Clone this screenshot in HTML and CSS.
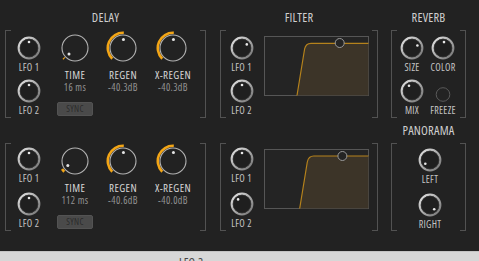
FILE: index.html
```html
<!DOCTYPE html>
<html lang="en">
<head>
    <meta charset="UTF-8">
    <meta name="viewport" content="width=device-width, initial-scale=1.0">
    <title>Effects</title>
    <link rel="stylesheet" href="styles.css">
</head>
<body>

    <!-- shared gradient for the small knobs -->
    <svg class="defs" width="0" height="0">
        <defs>
            <linearGradient id="ring" x1="0" y1="0" x2="1" y2="1">
                <stop offset="0" stop-color="#e4e4e4"/>
                <stop offset="1" stop-color="#727272"/>
            </linearGradient>
        </defs>
    </svg>

    <!-- Row 1 -->
    <div class="row first">
        <section class="module delay">
            <h2>DELAY</h2>
            <div class="box">
                <div class="lfos">
                    <div class="ctl">
                        <svg class="knob" viewBox="0 0 24 24"><circle class="ring" cx="12" cy="12" r="10.3"/><circle class="face" cx="12" cy="12" r="8.9"/><circle class="dot" cx="12" cy="6" r="1.3"/></svg>
                        <span class="lbl">LFO 1</span>
                    </div>
                    <div class="ctl">
                        <svg class="knob" viewBox="0 0 24 24"><circle class="ring" cx="12" cy="12" r="10.3"/><circle class="face" cx="12" cy="12" r="8.9"/><circle class="dot" cx="12" cy="6" r="1.3"/></svg>
                        <span class="lbl">LFO 2</span>
                    </div>
                </div>
                <div class="param time">
                    <svg class="big" viewBox="0 0 34 34"><path class="arc" d="M6.25 27.75 A15.2 15.2 0 0 1 5.53 26.97"/><circle class="face" cx="17" cy="17" r="13"/><circle class="dot" cx="10.99" cy="23.01" r="1.5"/></svg>
                    <span class="name">TIME</span>
                    <span class="val">16 ms</span>
                    <button class="sync">SYNC</button>
                </div>
                <div class="param regen">
                    <svg class="big" viewBox="0 0 34 34"><path class="arc" d="M6.25 27.75 A15.2 15.2 0 0 1 17.8 1.82"/><circle class="face" cx="17" cy="17" r="13"/><circle class="dot" cx="17.44" cy="8.51" r="1.5"/></svg>
                    <span class="name">REGEN</span>
                    <span class="val">-40.3dB</span>
                </div>
                <div class="param xregen">
                    <svg class="big" viewBox="0 0 34 34"><path class="arc" d="M6.25 27.75 A15.2 15.2 0 0 1 17.8 1.82"/><circle class="face" cx="17" cy="17" r="13"/><circle class="dot" cx="17.44" cy="8.51" r="1.5"/></svg>
                    <span class="name">X-REGEN</span>
                    <span class="val">-40.3dB</span>
                </div>
            </div>
        </section>

        <section class="module filter">
            <h2>FILTER</h2>
            <div class="box">
                <div class="lfos">
                    <div class="ctl">
                        <svg class="knob" viewBox="0 0 24 24"><circle class="ring" cx="12" cy="12" r="10.3"/><circle class="face" cx="12" cy="12" r="8.9"/><circle class="dot" cx="16.8" cy="8.4" r="1.3"/></svg>
                        <span class="lbl">LFO 1</span>
                    </div>
                    <div class="ctl">
                        <svg class="knob" viewBox="0 0 24 24"><circle class="ring" cx="12" cy="12" r="10.3"/><circle class="face" cx="12" cy="12" r="8.9"/><circle class="dot" cx="12" cy="6" r="1.3"/></svg>
                        <span class="lbl">LFO 2</span>
                    </div>
                </div>
                <svg class="graph" viewBox="0 0 105 60">
                    <rect class="frame" x="0.5" y="0.5" width="104" height="59"/>
                    <path class="area" d="M33 59.5 L40.6 13 Q41.8 7.3 47 7.3 H104.5 V59.5 Z"/>
                    <path class="curve" d="M33 59.5 L40.6 13 Q41.8 7.3 47 7.3 H104.5"/>
                    <circle class="handle" cx="75.7" cy="7" r="4.5"/>
                </svg>
            </div>
        </section>

        <section class="module side">
            <h2>REVERB</h2>
            <div class="box reverb">
                <div class="ctl">
                    <svg class="knob" viewBox="0 0 24 24"><circle class="ring" cx="12" cy="12" r="10.3"/><circle class="face" cx="12" cy="12" r="8.9"/><circle class="dot" cx="17.4" cy="9.5" r="1.3"/></svg>
                    <span class="lbl">SIZE</span>
                </div>
                <div class="ctl">
                    <svg class="knob" viewBox="0 0 24 24"><circle class="ring" cx="12" cy="12" r="10.3"/><circle class="face" cx="12" cy="12" r="8.9"/><circle class="dot" cx="13" cy="6.1" r="1.3"/></svg>
                    <span class="lbl">COLOR</span>
                </div>
                <div class="ctl">
                    <svg class="knob" viewBox="0 0 24 24"><circle class="ring" cx="12" cy="12" r="10.3"/><circle class="face" cx="12" cy="12" r="8.9"/><circle class="dot" cx="9" cy="6.8" r="1.3"/></svg>
                    <span class="lbl">MIX</span>
                </div>
                <div class="ctl">
                    <svg class="knob" viewBox="0 0 24 24"><circle class="toggle" cx="12" cy="15.5" r="6.8"/></svg>
                    <span class="lbl">FREEZE</span>
                </div>
            </div>
        </section>
    </div>

    <!-- Row 2 -->
    <div class="row second">
        <section class="module delay">
            <div class="head"></div>
            <div class="box">
                <div class="lfos">
                    <div class="ctl">
                        <svg class="knob" viewBox="0 0 24 24"><circle class="ring" cx="12" cy="12" r="10.3"/><circle class="face" cx="12" cy="12" r="8.9"/><circle class="dot" cx="12" cy="6" r="1.3"/></svg>
                        <span class="lbl">LFO 1</span>
                    </div>
                    <div class="ctl">
                        <svg class="knob" viewBox="0 0 24 24"><circle class="ring" cx="12" cy="12" r="10.3"/><circle class="face" cx="12" cy="12" r="8.9"/><circle class="dot" cx="12" cy="6" r="1.3"/></svg>
                        <span class="lbl">LFO 2</span>
                    </div>
                </div>
                <div class="param time">
                    <svg class="big" viewBox="0 0 34 34"><path class="arc" d="M6.25 27.75 A15.2 15.2 0 0 1 4.11 25.05"/><circle class="face" cx="17" cy="17" r="13"/><circle class="dot" cx="9.79" cy="21.5" r="1.5"/></svg>
                    <span class="name">TIME</span>
                    <span class="val">112 ms</span>
                    <button class="sync">SYNC</button>
                </div>
                <div class="param regen">
                    <svg class="big" viewBox="0 0 34 34"><path class="arc" d="M6.25 27.75 A15.2 15.2 0 0 1 17.8 1.82"/><circle class="face" cx="17" cy="17" r="13"/><circle class="dot" cx="17.44" cy="8.51" r="1.5"/></svg>
                    <span class="name">REGEN</span>
                    <span class="val">-40.6dB</span>
                </div>
                <div class="param xregen">
                    <svg class="big" viewBox="0 0 34 34"><path class="arc" d="M6.25 27.75 A15.2 15.2 0 0 1 17.8 1.82"/><circle class="face" cx="17" cy="17" r="13"/><circle class="dot" cx="17.44" cy="8.51" r="1.5"/></svg>
                    <span class="name">X-REGEN</span>
                    <span class="val">-40.0dB</span>
                </div>
            </div>
        </section>

        <section class="module filter">
            <div class="head"></div>
            <div class="box">
                <div class="lfos">
                    <div class="ctl">
                        <svg class="knob" viewBox="0 0 24 24"><circle class="ring" cx="12" cy="12" r="10.3"/><circle class="face" cx="12" cy="12" r="8.9"/><circle class="dot" cx="12" cy="6" r="1.3"/></svg>
                        <span class="lbl">LFO 1</span>
                    </div>
                    <div class="ctl">
                        <svg class="knob" viewBox="0 0 24 24"><circle class="ring" cx="12" cy="12" r="10.3"/><circle class="face" cx="12" cy="12" r="8.9"/><circle class="dot" cx="8.1" cy="7.4" r="1.3"/></svg>
                        <span class="lbl">LFO 2</span>
                    </div>
                </div>
                <svg class="graph" viewBox="0 0 105 60">
                    <rect class="frame" x="0.5" y="0.5" width="104" height="59"/>
                    <path class="area" d="M35.7 59.5 L43.3 13 Q44.5 7 49.7 7 H104.5 V59.5 Z"/>
                    <path class="curve" d="M35.7 59.5 L43.3 13 Q44.5 7 49.7 7 H104.5"/>
                    <circle class="handle" cx="78.4" cy="7" r="4.5"/>
                </svg>
            </div>
        </section>

        <section class="module side">
            <h2>PANORAMA</h2>
            <div class="box panorama">
                <div class="ctl">
                    <svg class="knob" viewBox="0 0 24 24"><circle class="ring" cx="12" cy="12" r="10.3"/><circle class="face" cx="12" cy="12" r="8.9"/><circle class="dot" cx="7.3" cy="15.7" r="1.3"/></svg>
                    <span class="lbl">LEFT</span>
                </div>
                <div class="ctl">
                    <svg class="knob" viewBox="0 0 24 24"><circle class="ring" cx="12" cy="12" r="10.3"/><circle class="face" cx="12" cy="12" r="8.9"/><circle class="dot" cx="16.2" cy="16.2" r="1.3"/></svg>
                    <span class="lbl">RIGHT</span>
                </div>
            </div>
        </section>
    </div>

    <!-- Tab strip -->
    <div class="tabs"><span>LFO 3</span></div>

</body>
</html>
```

FILE: styles.css
```css
/* Effects panel */
* { margin: 0; padding: 0; box-sizing: border-box; }
body {
    background: #222; color: #c8c8c8; height: 261px; overflow: hidden;
    font-family: "Open Sans", "Liberation Sans", sans-serif; font-stretch: 75%;
}
.defs { position: absolute; }

.row { display: flex; padding-left: 5px; }
.row.first { padding-top: 5px; }

.module.delay { width: 201px; }
.module.filter { width: 158px; margin-left: 14px; }
.module.side { width: 75px; margin-left: 13px; }

h2, .head { height: 25px; line-height: 25px; text-align: center; font-size: 12.5px; font-weight: normal; color: #cfcfcf; letter-spacing: 0.2px; }

/* bracket frame */
.box { position: relative; height: 88px; display: flex; }
.box::before, .box::after {
    content: ""; position: absolute; top: 0; bottom: 0; width: 5px;
    border: 1px solid #525252;
}
.box::before { left: 0; border-right: none; }
.box::after { right: 0; border-left: none; }

/* small knobs */
.ctl { display: flex; flex-direction: column; align-items: center; }
.knob { width: 24px; height: 24px; display: block; }
.knob .ring { fill: none; stroke: url(#ring); stroke-width: 2.2; }
.knob .face { fill: #1f1f1f; stroke: #3c3c3c; stroke-width: 0.6; }
.knob .dot { fill: #e8e8e8; }
.knob .toggle { fill: #232323; stroke: #5a5a5a; stroke-width: 1; }
.lbl { font-size: 10px; line-height: 10px; margin-top: 2px; color: #c4c4c4; white-space: nowrap; letter-spacing: 0.3px; }

.lfos { display: flex; flex-direction: column; align-items: center; padding-top: 6px; gap: 7px; }
.delay .lfos { width: 48px; }
.filter .lfos { width: 43px; }
.second .lfos { padding-top: 4px; gap: 9px; }

/* big knobs */
.param { display: flex; flex-direction: column; align-items: center; padding-top: 1px; }
.param.time { width: 44px; }
.param.regen { width: 52px; }
.param.xregen { width: 48px; }
.big { width: 34px; height: 34px; display: block; }
.big .arc { fill: none; stroke: #f2a516; stroke-width: 2.6; }
.big .face { fill: #222; stroke: #b2b2b2; stroke-width: 1.1; }
.big .dot { fill: #e4e4e4; }
.name { font-size: 11px; line-height: 12px; margin-top: 3.5px; color: #d6d6d6; white-space: nowrap; letter-spacing: 0.4px; }
.val { font-size: 10px; line-height: 12px; color: #939393; white-space: nowrap; letter-spacing: 0.4px; }

.sync {
    width: 36px; height: 14px; margin-top: 9px; border: 1px solid #535353; border-radius: 2px;
    background: #4a4a4a; color: #2a2a2a; font: inherit; font-size: 9px; line-height: 12px; letter-spacing: 0.3px;
}

/* filter graph */
.graph { width: 105px; height: 60px; margin: 6px 0 0 1px; display: block; }
.graph .frame { fill: #242424; stroke: #565656; stroke-width: 1; }
.graph .area { fill: #3c3428; }
.graph .curve { fill: none; stroke: #b5821c; stroke-width: 1.2; }
.graph .handle { fill: #242424; stroke: #9a9a9a; stroke-width: 1; }

/* reverb / panorama */
.box.reverb { display: grid; grid-template-columns: 31px 31px; row-gap: 7px; padding: 6px 0 0 5.5px; align-content: start; }
.box.panorama { flex-direction: column; align-items: center; padding: 5px 0 0 3px; gap: 9px; }

/* bottom tab strip */
.tabs {
    margin-top: 20px; height: 12px; background: #d7d7d7; border-top: 1px solid #c4c4c4;
    padding: 4px 0 0 179px; font-size: 12px; line-height: 14px; color: #444; letter-spacing: 0.3px;
}
```
